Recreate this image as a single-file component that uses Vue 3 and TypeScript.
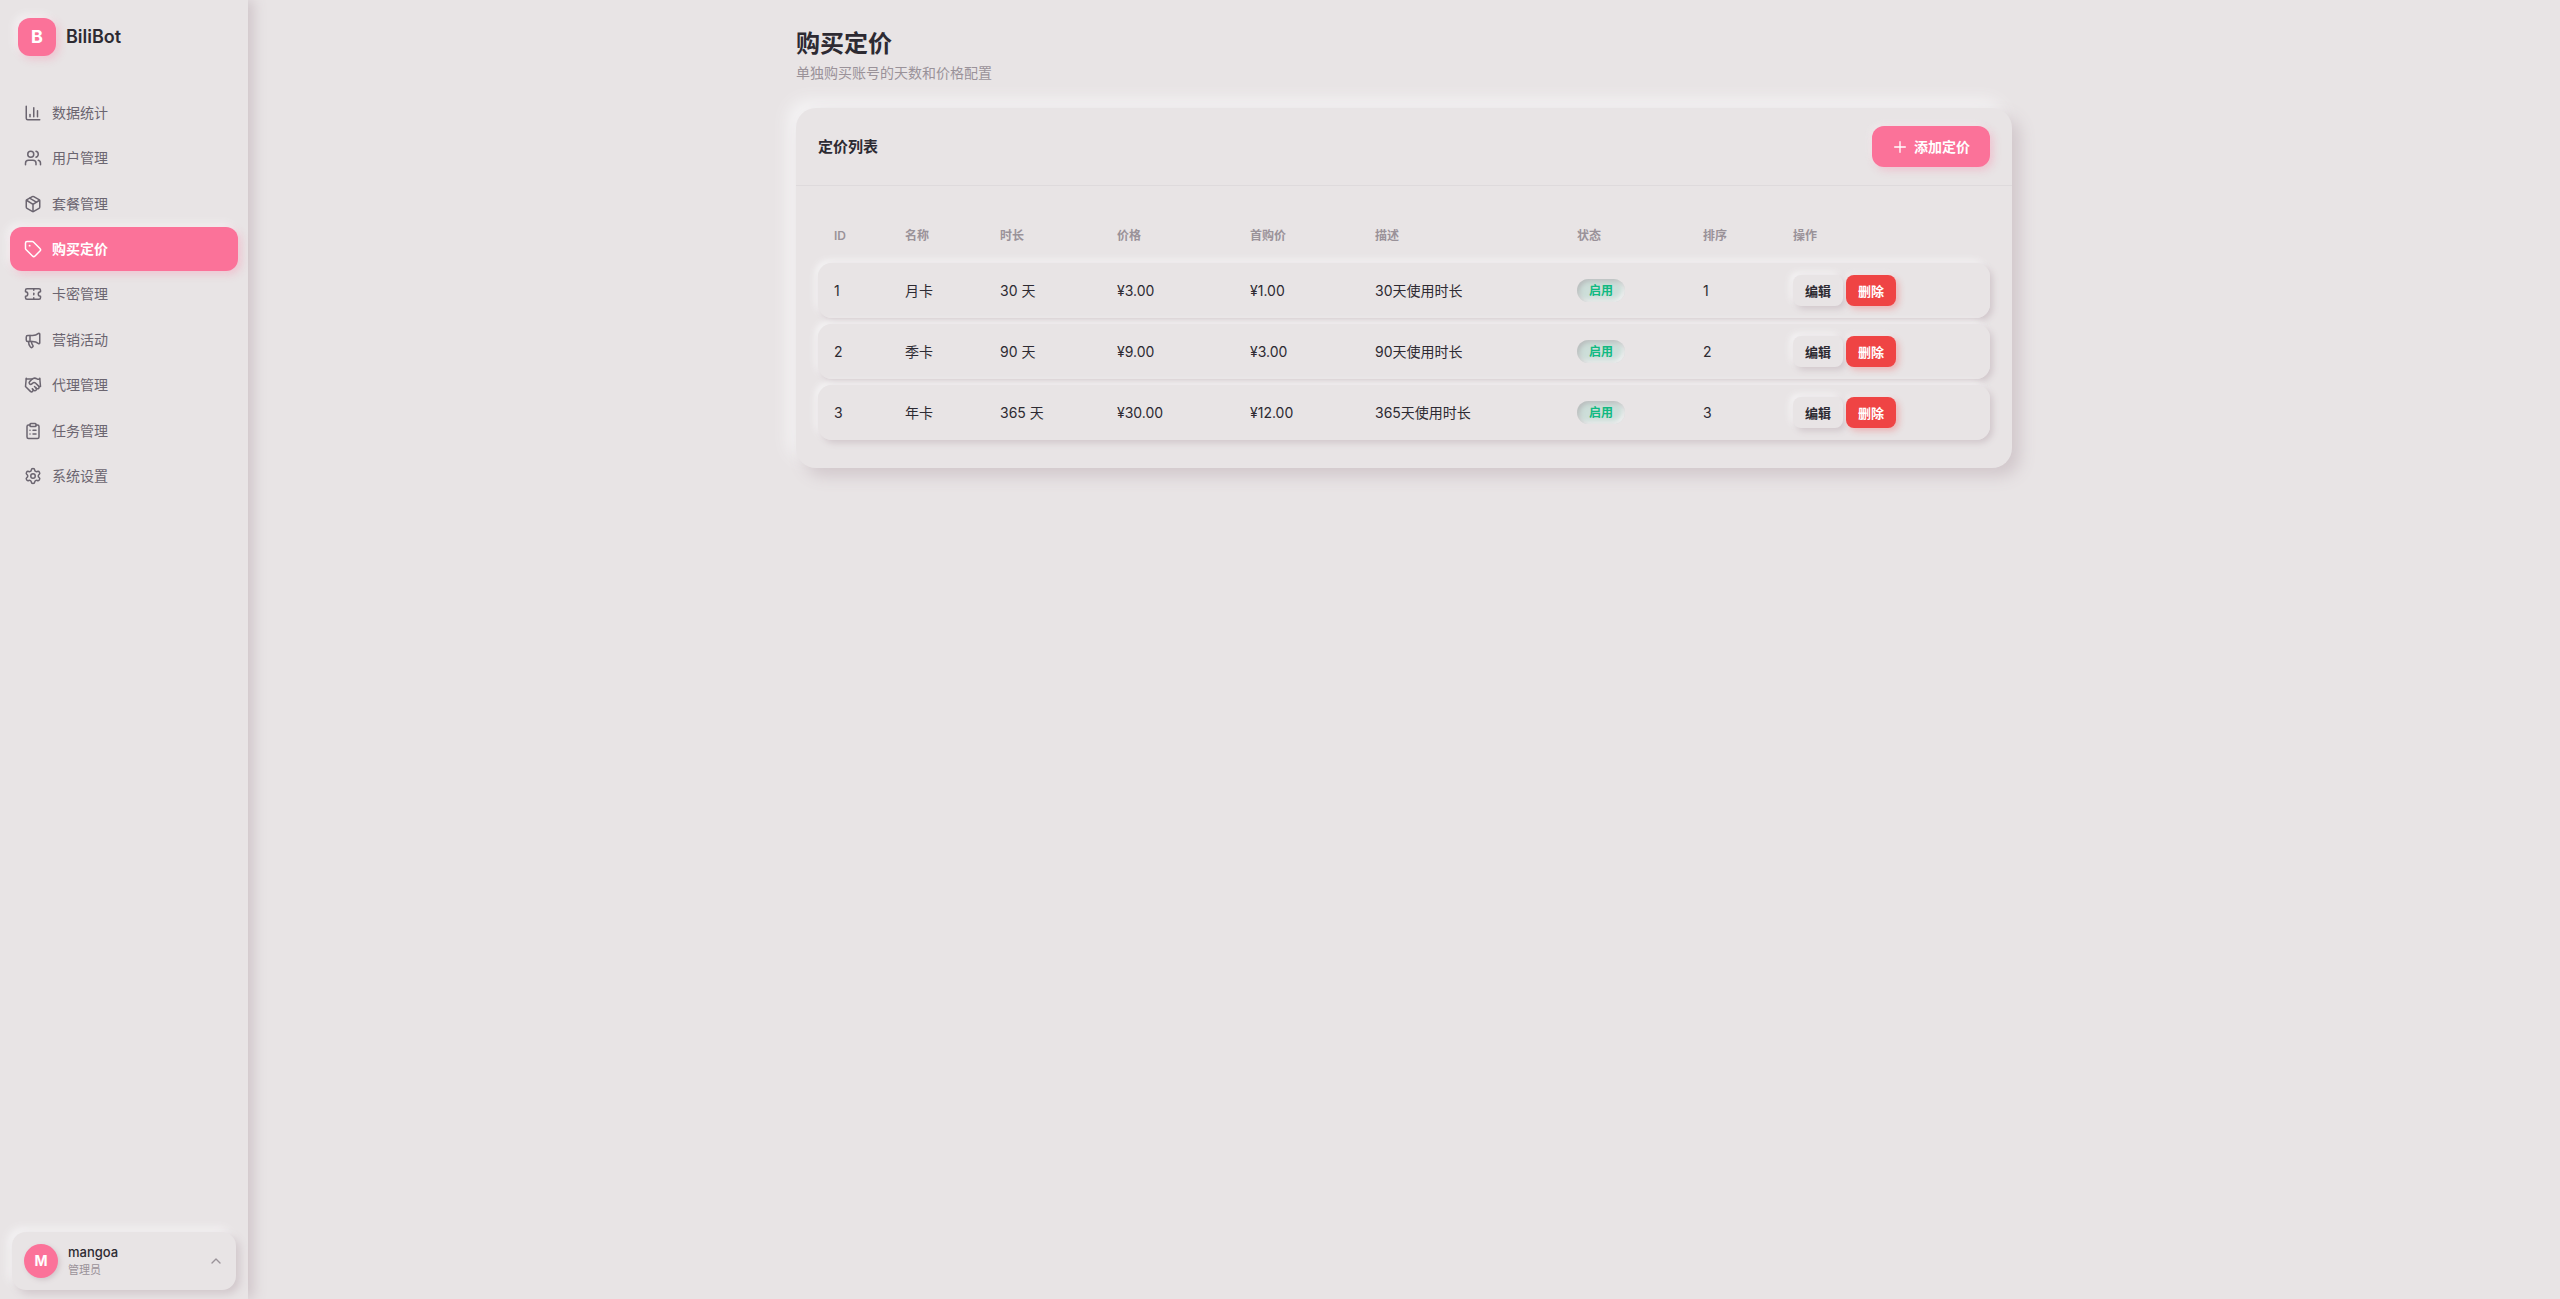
<script setup lang="ts">
interface NavItem {
  label: string
  active?: boolean
  paths: string[]
}

interface Plan {
  id: number
  name: string
  days: number
  price: string
  firstPrice: string
  description: string
  enabled: boolean
  sort: number
}

const navItems: NavItem[] = [
  { label: '数据统计', paths: ['M3 3v16a2 2 0 0 0 2 2h16', 'M18 17V9', 'M13 17V5', 'M8 17v-3'] },
  {
    label: '用户管理',
    paths: [
      'M16 21v-2a4 4 0 0 0-4-4H6a4 4 0 0 0-4 4v2',
      'M9 3a4 4 0 1 0 0 8a4 4 0 1 0 0-8',
      'M22 21v-2a4 4 0 0 0-3-3.87',
      'M16 3.13a4 4 0 0 1 0 7.75',
    ],
  },
  {
    label: '套餐管理',
    paths: [
      'M11 21.73a2 2 0 0 0 2 0l7-4A2 2 0 0 0 21 16V8a2 2 0 0 0-1-1.73l-7-4a2 2 0 0 0-2 0l-7 4A2 2 0 0 0 3 8v8a2 2 0 0 0 1 1.73z',
      'M12 22V12',
      'M3.3 7l7.7 4.73a2 2 0 0 0 2 0L20.7 7',
      'M7.5 4.27l9 5.15',
    ],
  },
  {
    label: '购买定价',
    active: true,
    paths: [
      'M12.586 2.586A2 2 0 0 0 11.172 2H4a2 2 0 0 0-2 2v7.172a2 2 0 0 0 .586 1.414l8.704 8.704a2.426 2.426 0 0 0 3.42 0l6.58-6.58a2.426 2.426 0 0 0 0-3.42z',
      'M7.5 7.2a.3.3 0 1 0 0 .6a.3.3 0 1 0 0-.6',
    ],
  },
  {
    label: '卡密管理',
    paths: [
      'M2 9a3 3 0 0 1 0 6v2a2 2 0 0 0 2 2h16a2 2 0 0 0 2-2v-2a3 3 0 0 1 0-6V7a2 2 0 0 0-2-2H4a2 2 0 0 0-2 2Z',
      'M13 5v2',
      'M13 17v2',
      'M13 11v2',
    ],
  },
  {
    label: '营销活动',
    paths: [
      'M11 6a13 13 0 0 0 8.4-2.8A1 1 0 0 1 21 4v12a1 1 0 0 1-1.6.8A13 13 0 0 0 11 14H5a2 2 0 0 1-2-2V8a2 2 0 0 1 2-2z',
      'M6 14a12 12 0 0 0 2.4 7.2 2 2 0 0 0 3.2-2.4A8 8 0 0 1 10 14',
      'M8 6v8',
    ],
  },
  {
    label: '代理管理',
    paths: [
      'M11 17l2 2a1 1 0 1 0 3-3',
      'M14 14l2.5 2.5a1 1 0 1 0 3-3l-3.88-3.88a3 3 0 0 0-4.24 0l-.88.88a1 1 0 1 1-3-3l2.81-2.81a5.79 5.79 0 0 1 7.06-.87l.47.28a2 2 0 0 0 1.42.25L21 4',
      'M21 3l1 11h-2',
      'M3 3L2 14l6.5 6.5a1 1 0 1 0 3-3',
      'M3 4h8',
    ],
  },
  {
    label: '任务管理',
    paths: [
      'M9 2h6a1 1 0 0 1 1 1v2a1 1 0 0 1-1 1H9a1 1 0 0 1-1-1V3a1 1 0 0 1 1-1z',
      'M16 4h2a2 2 0 0 1 2 2v14a2 2 0 0 1-2 2H6a2 2 0 0 1-2-2V6a2 2 0 0 1 2-2h2',
      'M12 11h4',
      'M12 16h4',
      'M8 11h.01',
      'M8 16h.01',
    ],
  },
  {
    label: '系统设置',
    paths: [
      'M9.671 4.136a2.34 2.34 0 0 1 4.659 0 2.34 2.34 0 0 0 3.319 1.915 2.34 2.34 0 0 1 2.33 4.033 2.34 2.34 0 0 0 0 3.831 2.34 2.34 0 0 1-2.33 4.033 2.34 2.34 0 0 0-3.319 1.915 2.34 2.34 0 0 1-4.659 0 2.34 2.34 0 0 0-3.32-1.915 2.34 2.34 0 0 1-2.33-4.033 2.34 2.34 0 0 0 0-3.831A2.34 2.34 0 0 1 6.35 6.051a2.34 2.34 0 0 0 3.319-1.915',
      'M12 9a3 3 0 1 0 0 6a3 3 0 1 0 0-6',
    ],
  },
]

const columns = ['ID', '名称', '时长', '价格', '首购价', '描述', '状态', '排序', '操作']

const plans: Plan[] = [
  { id: 1, name: '月卡', days: 30, price: '3.00', firstPrice: '1.00', description: '30天使用时长', enabled: true, sort: 1 },
  { id: 2, name: '季卡', days: 90, price: '9.00', firstPrice: '3.00', description: '90天使用时长', enabled: true, sort: 2 },
  { id: 3, name: '年卡', days: 365, price: '30.00', firstPrice: '12.00', description: '365天使用时长', enabled: true, sort: 3 },
]
</script>

<template>
  <div class="layout">
    <aside class="sidebar">
      <div class="brand">
        <span class="brand-mark">B</span>
        <span class="brand-name">BiliBot</span>
      </div>

      <nav class="nav">
        <a v-for="item in navItems" :key="item.label" href="#" class="nav-item" :class="{ active: item.active }">
          <svg class="icon" viewBox="0 0 24 24" aria-hidden="true">
            <path v-for="d in item.paths" :key="d" :d="d" />
          </svg>
          <span>{{ item.label }}</span>
        </a>
      </nav>

      <button type="button" class="user">
        <span class="avatar">M</span>
        <span class="user-text">
          <span class="user-name">mangoa</span>
          <span class="user-role">管理员</span>
        </span>
        <svg class="icon chevron" viewBox="0 0 24 24" aria-hidden="true"><path d="M18 15l-6-6-6 6" /></svg>
      </button>
    </aside>

    <main class="main">
      <div class="content">
        <header class="page-header">
          <h1>购买定价</h1>
          <p>单独购买账号的天数和价格配置</p>
        </header>

        <section class="card">
          <div class="card-header">
            <h2>定价列表</h2>
            <button type="button" class="btn-primary">
              <svg class="icon plus" viewBox="0 0 24 24" aria-hidden="true"><path d="M4 12h16" /><path d="M12 4v16" /></svg>
              <span>添加定价</span>
            </button>
          </div>
          <div class="card-body">
            <table>
              <colgroup>
                <col class="c-id" />
                <col class="c-name" />
                <col class="c-days" />
                <col class="c-price" />
                <col class="c-first" />
                <col class="c-desc" />
                <col class="c-status" />
                <col class="c-sort" />
                <col />
              </colgroup>
              <thead>
                <tr>
                  <th v-for="c in columns" :key="c" scope="col">{{ c }}</th>
                </tr>
              </thead>
              <tbody>
                <tr v-for="plan in plans" :key="plan.id">
                  <td>{{ plan.id }}</td>
                  <td>{{ plan.name }}</td>
                  <td>{{ plan.days }} 天</td>
                  <td>¥{{ plan.price }}</td>
                  <td>¥{{ plan.firstPrice }}</td>
                  <td>{{ plan.description }}</td>
                  <td><span class="badge">{{ plan.enabled ? '启用' : '停用' }}</span></td>
                  <td>{{ plan.sort }}</td>
                  <td>
                    <div class="actions">
                      <button type="button" class="btn-small">编辑</button>
                      <button type="button" class="btn-small danger">删除</button>
                    </div>
                  </td>
                </tr>
              </tbody>
            </table>
          </div>
        </section>
      </div>
    </main>
  </div>
</template>

<style>
body {
  margin: 0;
  background: #e8e4e5;
}
</style>

<style scoped>
.layout {
  --bg: #e8e4e5;
  --dark: #d1c7cb;
  --light: #f5f4f5;
  --pink: #fb7299;
  --text: #2d2a32;
  --text-2: #6b6570;
  --text-3: #9a9299;
  display: flex;
  min-height: 100vh;
  background: var(--bg);
  color: var(--text);
  font-family: Inter, 'Noto Sans CJK SC', sans-serif;
  font-size: 14px;
  line-height: 20px;
}

button {
  border: 0;
  font: inherit;
  cursor: pointer;
}

.icon {
  width: 18px;
  height: 18px;
  flex: none;
  fill: none;
  stroke: currentColor;
  stroke-width: 2;
  stroke-linecap: round;
  stroke-linejoin: round;
}

.sidebar {
  position: sticky;
  top: 0;
  z-index: 1;
  box-sizing: border-box;
  display: flex;
  flex-direction: column;
  width: 248px;
  height: 100vh;
  flex: none;
  padding: 18px 10px 9px;
  background: var(--bg);
  box-shadow: 6px 0 12px var(--dark);
}

.brand {
  display: flex;
  align-items: center;
  gap: 10px;
  padding: 0 8px;
}

.brand-mark {
  display: grid;
  place-items: center;
  width: 38px;
  height: 38px;
  border-radius: 12px;
  background: var(--pink);
  color: #fff;
  font-size: 18px;
  font-weight: 700;
  box-shadow: 3px 3px 8px rgba(251, 114, 153, 0.3), -3px -3px 8px var(--light);
}

.brand-name {
  font-size: 18px;
  font-weight: 600;
}

.nav {
  display: grid;
  grid-auto-rows: 1fr;
  gap: 2px;
  height: 407px;
  margin-top: 35px;
}

.nav-item {
  display: flex;
  align-items: center;
  gap: 10px;
  padding: 0 14px;
  border-radius: 12px;
  color: var(--text-2);
  text-decoration: none;
}

.nav-item.active {
  background: var(--pink);
  color: #fff;
  font-weight: 600;
  box-shadow: 3px 3px 8px rgba(251, 114, 153, 0.3), -3px -3px 8px var(--light);
}

.user {
  display: flex;
  align-items: center;
  gap: 10px;
  height: 58px;
  margin: auto 2px 0;
  padding: 0 12px;
  border-radius: 14px;
  background: var(--bg);
  color: var(--text);
  text-align: left;
  box-shadow: 4px 4px 8px var(--dark), -4px -4px 8px var(--light);
}

.avatar {
  display: grid;
  place-items: center;
  width: 34px;
  height: 34px;
  border-radius: 50%;
  background: var(--pink);
  color: #fff;
  font-weight: 700;
  box-shadow: 2px 2px 5px var(--dark);
}

.user-text {
  display: flex;
  flex: 1;
  flex-direction: column;
}

.user-name {
  font-size: 13px;
  font-weight: 500;
  line-height: 18px;
}

.user-role {
  color: var(--text-3);
  font-size: 11px;
  line-height: 19px;
}

.chevron {
  width: 16px;
  height: 16px;
  color: var(--text-3);
}

.main {
  flex: 1;
  min-width: 0;
  padding: 24px 32px;
}

.content {
  max-width: 1216px;
  margin: 0 auto;
}

.page-header h1 {
  margin: 0;
  font-size: 24px;
  font-weight: 700;
  line-height: 40px;
}

.page-header p {
  margin: 0;
  color: var(--text-3);
  line-height: 18px;
}

.card {
  margin-top: 26px;
  border-radius: 20px;
  background: var(--bg);
  box-shadow: 8px 8px 16px var(--dark), -8px -8px 16px var(--light);
}

.card-header {
  display: flex;
  align-items: center;
  justify-content: space-between;
  padding: 18px 22px;
  border-bottom: 1px solid #dedadc;
}

.card-header h2 {
  margin: 0;
  font-size: 15px;
  font-weight: 600;
}

.btn-primary {
  display: flex;
  align-items: center;
  gap: 6px;
  height: 41px;
  padding: 0 20px;
  border-radius: 12px;
  background: var(--pink);
  color: #fff;
  font-weight: 600;
  box-shadow: 3px 3px 8px rgba(251, 114, 153, 0.3), -2px -2px 6px rgba(245, 244, 245, 0.6);
}

.plus {
  width: 16px;
  height: 16px;
}

.card-body {
  padding: 22px;
}

table {
  width: 100%;
  table-layout: fixed;
  border-collapse: separate;
  border-spacing: 0 6px;
}

.c-id { width: 71px; }
.c-name { width: 95px; }
.c-days { width: 117px; }
.c-price { width: 133px; }
.c-first { width: 125px; }
.c-desc { width: 202px; }
.c-status { width: 126px; }
.c-sort { width: 90px; }

th,
td {
  padding: 0 16px;
  text-align: left;
  vertical-align: middle;
}

th {
  height: 43px;
  color: var(--text-3);
  font-size: 12px;
  font-weight: 600;
}

td {
  height: 55px;
  background: var(--bg);
}

td:first-child {
  border-radius: 14px 0 0 14px;
}

td:last-child {
  border-radius: 0 14px 14px 0;
}

tbody tr {
  border-radius: 14px;
  box-shadow: 3px 3px 6px var(--dark), -3px -3px 6px var(--light);
}

.badge {
  display: inline-block;
  padding: 0 12px;
  border-radius: 12px;
  background: rgba(16, 185, 129, 0.12);
  color: #10b981;
  font-size: 12px;
  font-weight: 600;
  line-height: 23px;
  vertical-align: middle;
  box-shadow: inset 2px 2px 5px rgba(160, 150, 155, 0.5), inset -2px -2px 5px var(--light);
}

.actions {
  display: flex;
  gap: 3px;
}

.btn-small {
  height: 31px;
  padding: 0 12px;
  border-radius: 8px;
  background: var(--bg);
  color: var(--text);
  font-size: 13px;
  font-weight: 600;
  box-shadow: 3px 3px 6px var(--dark), -3px -3px 6px var(--light);
}

.btn-small.danger {
  background: #ef4444;
  color: #fff;
  box-shadow: 3px 3px 6px rgba(239, 68, 68, 0.3), -2px -2px 6px rgba(245, 244, 245, 0.6);
}
</style>
